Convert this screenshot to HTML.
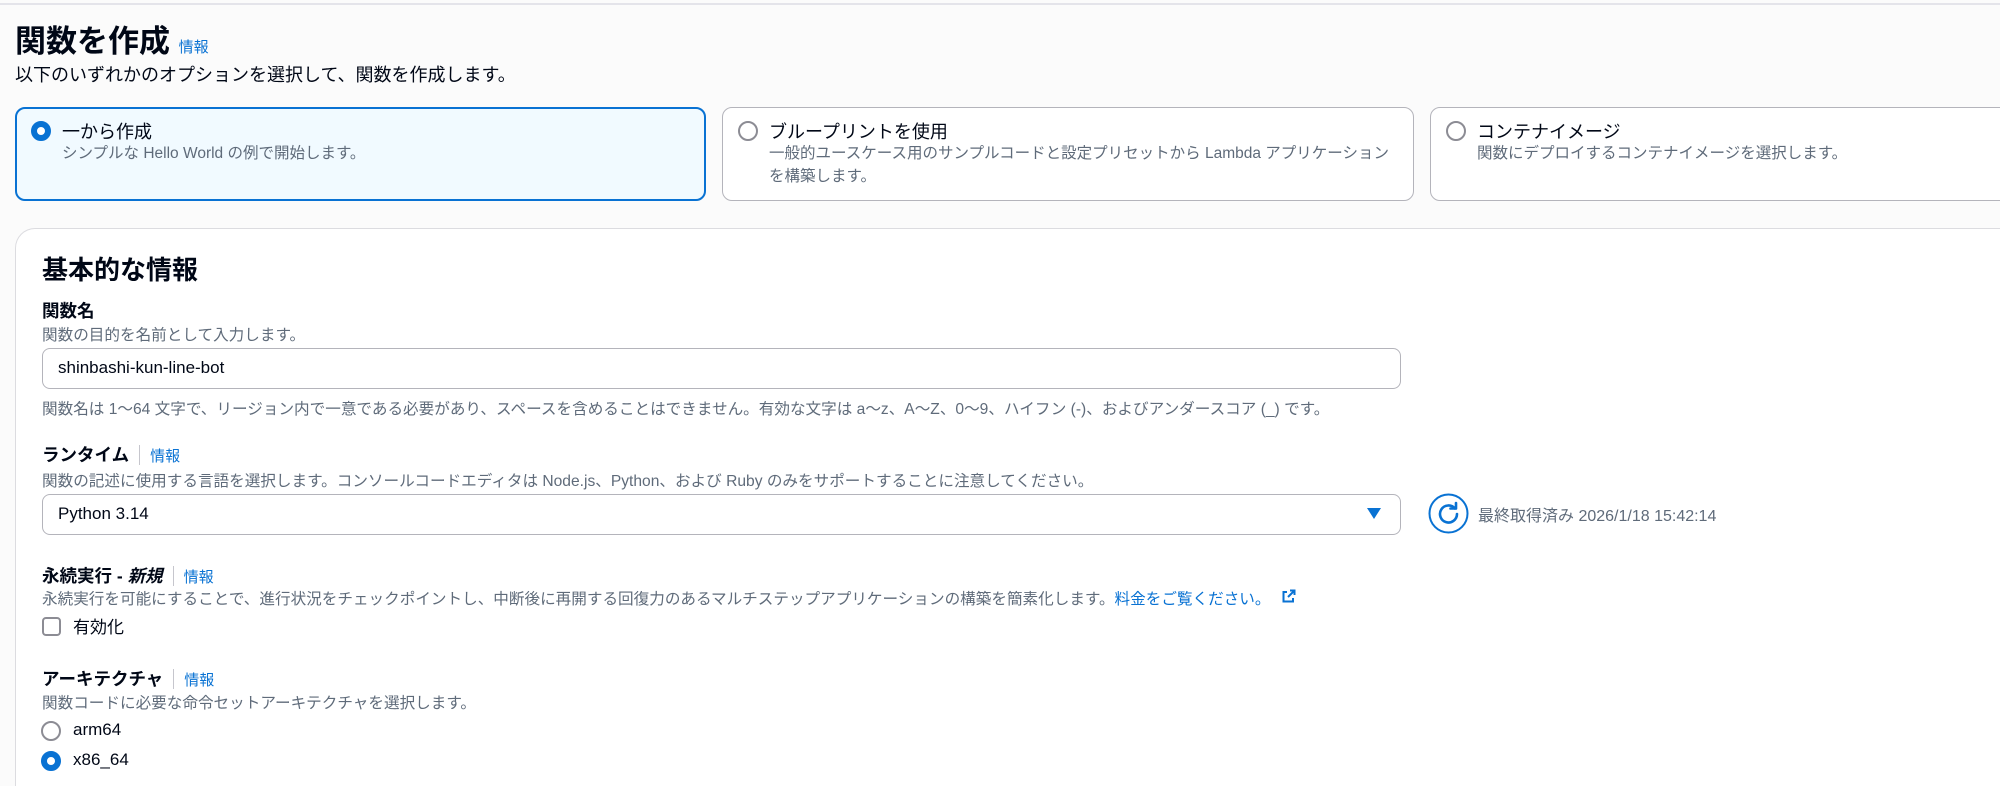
<!DOCTYPE html>
<html style="width:2000px;height:786px;overflow:hidden"><head><meta charset="utf-8"><style>
*{box-sizing:border-box;margin:0;padding:0}
body{width:2000px;height:786px;overflow:hidden;background:#fbfbfb;font-family:"Liberation Sans","Noto Sans CJK JP",sans-serif;color:#000716;position:relative}
.a{position:absolute;white-space:nowrap}
.topline{position:absolute;left:0;top:3px;width:2000px;height:2px;background:#e4e4ea}
.info{color:#0972d3;font-weight:bold}
.card{position:absolute;top:107px;height:94px;border:1.5px solid #b4b4bb;border-radius:10px;background:#fff}
.card.sel{border:2px solid #0972d3;background:#f1faff}
.radio{position:absolute;width:20px;height:20px;border-radius:50%;border:2px solid #8c8c94;background:#fff}
.radio.on{border:6px solid #0972d3}
.ct{position:absolute;font-size:18px;color:#000716}
.cd{position:absolute;font-size:15.5px;color:#5f6b7a;line-height:23px}
.panel{position:absolute;left:15px;top:228px;width:1985px;height:558px;background:#fff;border:1px solid #dcdce0;border-right:none;border-bottom:none;border-radius:20px 0 0 0}
.lbl{font-size:17.5px;font-weight:bold}
.desc{font-size:15.6px;color:#5f6b7a}
.sep{display:inline-block;width:1px;height:20px;background:#c6c6cd;margin:0 10px -4px 10px}
.inp{position:absolute;left:42px;width:1359px;height:41px;border:1.5px solid #b4b4bb;border-radius:8px;background:#fff;font-size:17px;padding-left:15px;line-height:38px}
</style></head><body>
<div class="topline"></div>
<div class="a" style="left:15px;top:16px;font-size:31px;font-weight:bold">関数を作成 <span class="info" style="font-size:15px;font-weight:normal;color:#0972d3">情報</span></div>
<div class="a" style="left:15px;top:61px;font-size:18px">以下のいずれかのオプションを選択して、関数を作成します。</div>

<div class="card sel" style="left:15px;width:691px"></div>
<div class="radio on" style="left:31px;top:121px"></div>
<div class="ct a" style="left:62px;top:118px">一から作成</div>
<div class="cd a" style="left:62px;top:142px">シンプルな Hello World の例で開始します。</div>

<div class="card" style="left:722px;width:692px"></div>
<div class="radio" style="left:738px;top:121px"></div>
<div class="ct a" style="left:769px;top:118px">ブループリントを使用</div>
<div class="cd" style="left:769px;top:142px;width:640px">一般的ユースケース用のサンプルコードと設定プリセットから Lambda アプリケーション<br>を構築します。</div>

<div class="card" style="left:1430px;width:700px"></div>
<div class="radio" style="left:1446px;top:121px"></div>
<div class="ct a" style="left:1477px;top:118px">コンテナイメージ</div>
<div class="cd a" style="left:1477px;top:142px">関数にデプロイするコンテナイメージを選択します。</div>

<div class="panel"></div>
<div class="a" style="left:42px;top:250px;font-size:26px;font-weight:bold">基本的な情報</div>

<div class="a lbl" style="left:42px;top:298px">関数名</div>
<div class="a desc" style="left:42px;top:323px">関数の目的を名前として入力します。</div>
<div class="inp" style="top:348px">shinbashi-kun-line-bot</div>
<div class="a desc" style="left:42px;top:397px">関数名は 1〜64 文字で、リージョン内で一意である必要があり、スペースを含めることはできません。有効な文字は a〜z、A〜Z、0〜9、ハイフン (-)、およびアンダースコア (_) です。</div>

<div class="a lbl" style="left:42px;top:442px">ランタイム<span class="sep"></span><span class="info" style="font-weight:normal;font-size:15px">情報</span></div>
<div class="a desc" style="left:42px;top:469px">関数の記述に使用する言語を選択します。コンソールコードエディタは Node.js、Python、および Ruby のみをサポートすることに注意してください。</div>
<div class="inp" style="top:494px">Python 3.14</div>
<svg class="a" style="left:1367px;top:508px" width="14" height="11"><path d="M0 0H14L7 11Z" fill="#0972d3"/></svg>
<svg class="a" style="left:1428px;top:493px" width="41" height="41" viewBox="0 0 41 41"><circle cx="20.5" cy="20.5" r="19" fill="#fff" stroke="#0972d3" stroke-width="2"/><path d="M27 15.5A8.5 8.5 0 1 0 29 21" fill="none" stroke="#0972d3" stroke-width="2.6" stroke-linecap="round"/><path d="M22.5 15.5H28V10" fill="none" stroke="#0972d3" stroke-width="2.6" stroke-linecap="round" stroke-linejoin="round"/></svg>
<div class="a" style="left:1478px;top:502px;font-size:16px;color:#5f6b7a">最終取得済み 2026/1/18 15:42:14</div>

<div class="a lbl" style="left:42px;top:563px">永続実行 - <i>新規</i><span class="sep"></span><span class="info" style="font-weight:normal;font-size:15px">情報</span></div>
<div class="a desc" style="left:42px;top:587px">永続実行を可能にすることで、進行状況をチェックポイントし、中断後に再開する回復力のあるマルチステップアプリケーションの構築を簡素化します。<span style="color:#0972d3">料金をご覧ください。</span></div>
<svg class="a" style="left:1282px;top:589px" width="14" height="14" viewBox="0 0 14 14"><path d="M8 1.5H12.5V6M12.5 1.5L6 8M5 3H1.5V12.5H11V9" fill="none" stroke="#0972d3" stroke-width="2"/></svg>
<div class="a" style="left:42px;top:617px;width:19px;height:19px;border:2px solid #8c8c94;border-radius:4px;background:#fff"></div>
<div class="a" style="left:73px;top:613px;font-size:17px">有効化</div>

<div class="a lbl" style="left:42px;top:666px">アーキテクチャ<span class="sep"></span><span class="info" style="font-weight:normal;font-size:15px">情報</span></div>
<div class="a desc" style="left:42px;top:691px">関数コードに必要な命令セットアーキテクチャを選択します。</div>
<div class="radio" style="left:41px;top:721px"></div>
<div class="a" style="left:73px;top:720px;font-size:17px">arm64</div>
<div class="radio on" style="left:41px;top:751px"></div>
<div class="a" style="left:73px;top:750px;font-size:17px">x86_64</div>
</body></html>
